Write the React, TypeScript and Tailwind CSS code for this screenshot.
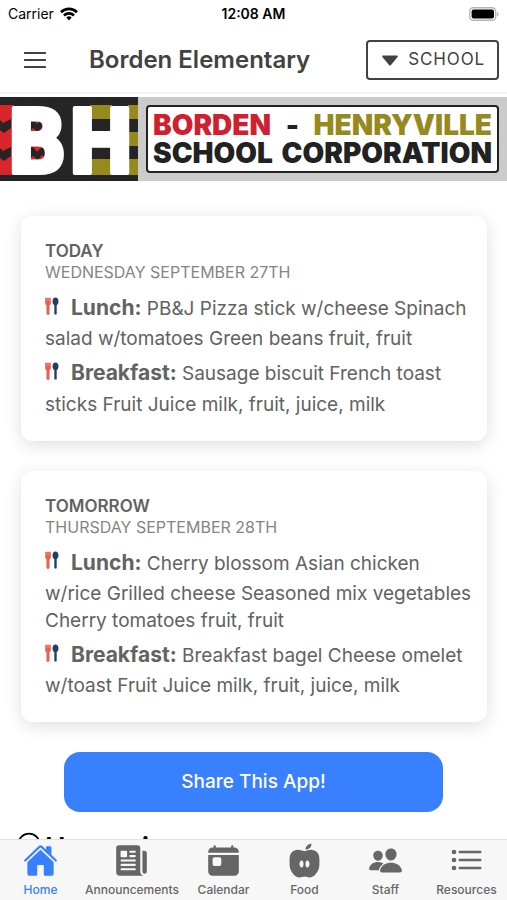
import type { ReactNode } from 'react';
import { IoHome, IoNewspaper, IoToday, IoPeople, IoEllipseOutline } from 'react-icons/io5';

interface Meal {
  name: string;
  items: string;
}

interface MenuDay {
  label: string;
  date: string;
  meals: Meal[];
}

const days: MenuDay[] = [
  {
    label: 'TODAY',
    date: 'WEDNESDAY SEPTEMBER 27TH',
    meals: [
      { name: 'Lunch', items: 'PB&J Pizza stick w/cheese Spinach salad w/tomatoes Green beans fruit, fruit' },
      { name: 'Breakfast', items: 'Sausage biscuit French toast sticks Fruit Juice milk, fruit, juice, milk' },
    ],
  },
  {
    label: 'TOMORROW',
    date: 'THURSDAY SEPTEMBER 28TH',
    meals: [
      { name: 'Lunch', items: 'Cherry blossom Asian chicken w/rice Grilled cheese Seasoned mix vegetables Cherry tomatoes fruit, fruit' },
      { name: 'Breakfast', items: 'Breakfast bagel Cheese omelet w/toast Fruit Juice milk, fruit, juice, milk' },
    ],
  },
];

function AppleIcon() {
  return (
    <svg viewBox="0 0 35 35" className="size-[35px]" fill="currentColor">
      <path d="M18.4 6.4c.3-3.300 2.400-5.400 6-6 .3 3.500-2.200 6-6 6z" />
      <path
        fillRule="evenodd"
        d="M17.500 8.200C15 7.600 13.200 6.800 10.800 6.800 6 6.800 2.600 10.300 2.600 16v6c0 3.500 1.600 6.500 3.600 9 1.700 2.300 3.900 3.500 6.300 3.500 2 0 3-.9 5-.9s3 .9 5 .9c2.400 0 4.600-1.200 6.300-3.500 2-2.500 3.600-5.500 3.600-9v-6c0-5.700-3.400-9.200-8.200-9.200-2.400 0-4.200.8-6.700 1.400zM14.700 17.500c1.200 0 1.800 1.500 1.800 3.500s-.6 3.500-1.800 3.500-2.200-1.500-2.200-3.500 1-3.500 2.200-3.500zM20.300 17.500c1.200 0 2.200 1.500 2.200 3.500s-1 3.500-2.200 3.500-1.800-1.500-1.800-3.500.6-3.500 1.800-3.500z"
      />
    </svg>
  );
}

function ListIcon() {
  return (
    <svg viewBox="0 0 35 35" className="size-[35px]" fill="currentColor">
      {[9, 17, 25].map((y) => (
        <g key={y}>
          <circle cx="5" cy={y} r="2.3" />
          <rect x="9.5" y={y - 1.2} width="23" height="2.4" rx="1.2" />
        </g>
      ))}
    </svg>
  );
}

const tabs: { label: string; icon: ReactNode }[] = [
  { label: 'Home', icon: <IoHome /> },
  { label: 'Announcements', icon: <IoNewspaper /> },
  { label: 'Calendar', icon: <IoToday /> },
  { label: 'Food', icon: <AppleIcon /> },
  { label: 'Staff', icon: <IoPeople /> },
  { label: 'Resources', icon: <ListIcon /> },
];

function StatusBar() {
  return (
    <div className="grid h-7 grid-cols-3 items-center px-2 text-sm text-black">
      <div className="flex items-center gap-1.5">
        <span>Carrier</span>
        <svg viewBox="0 0 18 14" className="h-3.5 w-[18px]" fill="none" stroke="currentColor" strokeWidth="2.6">
          <path d="M1 5.2a11.4 11.4 0 0 1 16 0" />
          <path d="M4 8.5a7 7 0 0 1 10 0" />
          <path d="M6.3 10.6a4 4 0 0 1 5.4 0L9 13.6z" fill="currentColor" stroke="none" />
        </svg>
      </div>
      <span className="text-center font-semibold">12:08 AM</span>
      <svg viewBox="0 0 30 14" className="h-3.5 w-[30px] justify-self-end">
        <rect x="0.7" y="0.7" width="26" height="12.6" rx="3.6" fill="#fff" stroke="#b5b5b5" strokeWidth="1.4" />
        <rect x="2.6" y="2.4" width="22.4" height="9.2" rx="2" fill="#000" />
        <path d="M28 5v4.4c1-.4 1.6-1.2 1.6-2.2S29 5.4 28 5z" fill="#b5b5b5" />
      </svg>
    </div>
  );
}

function Header() {
  return (
    <header className="flex h-[66px] items-center border-b-2 border-[#f4f4f4] pr-2 pl-6 text-[#424242]">
      <button type="button" aria-label="Menu">
        <svg viewBox="0 0 22 16" className="h-4 w-[22px]" fill="currentColor">
          <rect y="0" width="22" height="2" rx="0.5" />
          <rect y="7" width="22" height="2" rx="0.5" />
          <rect y="14" width="22" height="2" rx="0.5" />
        </svg>
      </button>
      <h1 className="ml-[43px] flex-1 text-2xl font-semibold whitespace-nowrap">Borden Elementary</h1>
      <button type="button" className="flex h-10 items-center gap-2.5 rounded-sm border-2 border-[#424242] pr-3 pl-3.5 text-[17px] tracking-wider">
        <svg viewBox="0 0 16 11" className="h-[11px] w-4" fill="currentColor">
          <path d="M1.2.5h13.6c.9 0 1.3 1 .8 1.6L9 10a1.3 1.3 0 0 1-2 0L.4 2.1C-.1 1.5.3.5 1.2.5z" />
        </svg>
        SCHOOL
      </button>
    </header>
  );
}

function Mascot() {
  return (
    <svg viewBox="0 0 138 84" className="h-[84px] w-[138px] shrink-0 bg-[#262425]" role="img" aria-label="BH">
      <rect x="0" y="8" width="14" height="70" fill="#d9262c" />
      <path d="M0 23l3 3 8-4v9l-7 5-4-3zM0 51l3 3 8-4v9l-7 5-4-3z" fill="#262425" />
      <rect x="25" y="18" width="25" height="48" fill="#d9262c" />
      <path d="M29 23l4-1 4 5 5-5 4 4v8l-4-4-4 5-5-4-4 3zM29 51l4-1 4 5 5-5 4 4v8l-4-4-4 5-5-4-4 3z" fill="#262425" />
      <path d="M90 8h22v14H90zM90 62h22v16H90zM128 8h10v14h-10zM128 35h10v14h-10zM128 62h10v16h-10z" fill="#968a1e" />
      <g fill="#fff" stroke="#fff" strokeWidth="4" strokeLinejoin="round" fontFamily="'DejaVu Sans Condensed', sans-serif" fontWeight="700" fontSize="89" textAnchor="middle">
        <text x="37" y="76">B</text>
        <text x="101" y="76">H</text>
      </g>
    </svg>
  );
}

function Banner() {
  return (
    <div className="flex bg-[#cbcbcb]">
      <Mascot />
      <div className="m-2 flex flex-1 flex-col justify-center rounded-sm border-2 border-[#222] bg-white text-[28px] leading-7 font-black whitespace-nowrap text-[#222]">
        <p className="flex justify-between px-[5px]">
          <span className="text-[#cf2030]">BORDEN</span>
          <span>-</span>
          <span className="text-[#968a1e]">HENRYVILLE</span>
        </p>
        <p className="flex justify-between px-[5px]">
          <span>SCHOOL</span>
          <span>CORPORATION</span>
        </p>
      </div>
    </div>
  );
}

function Utensils() {
  return (
    <span className="mr-3 inline-flex h-[31px] items-center align-middle">
      <svg viewBox="0 0 14 18" className="mb-2 h-[18px] w-3.5">
        <path d="M.5 1h1v3h.8V1h1.4v3h.8V1h1v5c0 1.3-.6 2-1.3 2.4V17c0 .8-2.4.8-2.4 0V8.4C1.1 8 .5 7.3.5 6z" fill="#e8604c" stroke="#e8604c" strokeWidth="0.6" />
        <path d="M10.5.5c1.8 0 3 1.5 3 3.700 0 2-.8 3.300-1.800 4V17c0 .8-2.400.8-2.400 0V8.200c-1-.7-1.800-2-1.800-4C7.500 2 8.700.5 10.500.5z" fill="#24405e" />
      </svg>
    </span>
  );
}

function DayCard({ day }: { day: MenuDay }) {
  return (
    <section className="rounded-xl bg-white pt-6 pr-3 pb-[23px] pl-6 text-[#626262] shadow-[0_4px_18px_rgba(0,0,0,0.13)]">
      <h2 className="text-[17px] leading-[22px] font-semibold">{day.label}</h2>
      <p className="text-base leading-[21px] text-[#858585]">{day.date}</p>
      <div className="mt-[11px] space-y-[7px]">
        {day.meals.map((meal) => (
          <p key={meal.name} className="text-[19px] leading-[27px]">
            <Utensils />
            <strong className="text-[21px] font-bold">{meal.name}:</strong> {meal.items}
          </p>
        ))}
      </div>
    </section>
  );
}

function TabBar() {
  return (
    <nav className="flex h-[61px] shrink-0 border-t border-[#e2e2e2] bg-[#f7f7f7]">
      {tabs.map((tab, i) => (
        <a
          key={tab.label}
          href={`#${tab.label.toLowerCase()}`}
          className={`flex flex-1 flex-col items-center px-1 pt-[3px] text-xs font-medium ${i === 0 ? 'text-[#3880ff]' : 'text-[#666]'}`}
        >
          <span className="mb-1 text-[35px] leading-none">{tab.icon}</span>
          {tab.label}
        </a>
      ))}
    </nav>
  );
}

export default function App() {
  return (
    <div className="flex h-screen flex-col bg-white font-[Inter,sans-serif]">
      <StatusBar />
      <Header />
      <main className="min-h-0 flex-1 overflow-y-auto pt-[3px] [scrollbar-width:none]">
        <Banner />
        <div className="space-y-[30px] pt-[35px] pr-5 pl-[21px]">
          {days.map((day) => (
            <DayCard key={day.label} day={day} />
          ))}
        </div>
        <div className="px-16 pt-[30px]">
          <button type="button" className="h-[60px] w-full rounded-2xl bg-[#3880ff] text-[19px] font-medium text-white">
            Share This App!
          </button>
        </div>
        <h2 className="flex items-start gap-0.5 px-[15px] pt-[18px] pb-6 text-[28px] leading-9 font-semibold text-black">
          <IoEllipseOutline />
          Upcoming
        </h2>
      </main>
      <TabBar />
    </div>
  );
}
